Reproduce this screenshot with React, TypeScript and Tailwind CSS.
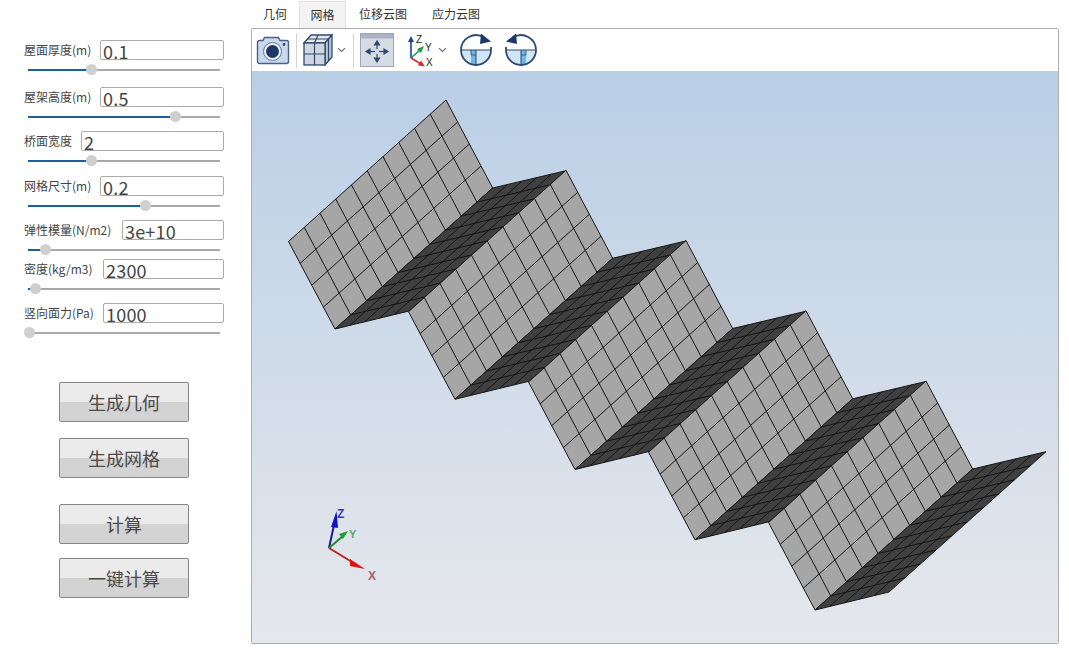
import React from "react";

const CJK = '"Noto Sans CJK SC","Noto Sans",sans-serif';

type P = [number, number];
const lerp = (a: P, b: P, t: number): P => [a[0] + (b[0] - a[0]) * t, a[1] + (b[1] - a[1]) * t];

function Mesh({ a, b, c, d, n, m, fill }: { a: P; b: P; c: P; d: P; n: number; m: number; fill: string }) {
  const lines: string[] = [];
  for (let i = 0; i <= n; i++) {
    const p = lerp(a, b, i / n);
    const q = lerp(d, c, i / n);
    lines.push(`M${p[0]} ${p[1]}L${q[0]} ${q[1]}`);
  }
  for (let j = 0; j <= m; j++) {
    const p = lerp(a, d, j / m);
    const q = lerp(b, c, j / m);
    lines.push(`M${p[0]} ${p[1]}L${q[0]} ${q[1]}`);
  }
  return (
    <g>
      <polygon points={[a, b, c, d].map((p) => p.join(",")).join(" ")} fill={fill} />
      <path d={lines.join("")} stroke="#141414" strokeWidth={1} fill="none" />
    </g>
  );
}

function Roof() {
  const units = [0, 1, 2, 3, 4];
  return (
    <svg viewBox="252 71 806 572" className="block w-full h-full">
      {units.map((i) => {
        const dx = 120 * i;
        const dy = 70.25 * i;
        const s = (x: number, y: number): P => [x + dx, y + dy];
        return (
          <g key={i}>
            <Mesh a={s(288.5, 241.5)} b={s(446, 100)} c={s(492.7, 188)} d={s(335, 329)} n={10} m={4} fill="#a6a6a6" />
            <Mesh a={s(335, 329)} b={s(492.7, 188)} c={s(566, 170.7)} d={s(409, 311)} n={10} m={5} fill="#404040" />
          </g>
        );
      })}
      {/* orientation triad */}
      <g>
        <line x1="329" y1="548" x2="334" y2="525" stroke="#16208c" strokeWidth="2" />
        <polygon points="336.5,511 331,527 338,528" fill="#1212c8" />
        <line x1="329" y1="548" x2="343" y2="536" stroke="#1f8a30" strokeWidth="2" />
        <polygon points="348,531 339,534 343,539" fill="#18a030" />
        <line x1="329" y1="548" x2="352" y2="562" stroke="#c02020" strokeWidth="2" />
        <polygon points="365,569 350,559 350,566" fill="#e01010" />
        <text x="337" y="518" fontFamily="Liberation Sans, sans-serif" fontSize="12" fontWeight="700" fill="#3a3aa8">Z</text>
        <text x="349" y="538" fontFamily="Liberation Sans, sans-serif" fontSize="11" fontWeight="700" fill="#58a868">Y</text>
        <text x="368" y="580" fontFamily="Liberation Sans, sans-serif" fontSize="12" fontWeight="700" fill="#a86068">X</text>
      </g>
    </svg>
  );
}

function Row({
  label,
  value,
  thumb,
  labelW,
  mt,
  pct,
}: {
  label: string;
  value: string;
  thumb: number;
  labelW: number;
  mt: number;
  pct?: boolean;
}) {
  const fillW = thumb;
  return (
    <div style={{ marginTop: mt }}>
      <div className="flex items-center h-[20px] pl-[24px] pr-[27px]">
        <span className="text-[12px] leading-[20px] text-[#444] whitespace-nowrap shrink-0" style={{ width: labelW }}>
          {label}
        </span>
        <div className="flex-1 h-[20px] border border-[#ababab] rounded-[2px] bg-white pl-[2px] text-[18px] leading-[20px] text-[#444] tracking-[0.2px] overflow-hidden">
          {value}
        </div>
      </div>
      <div className="relative h-[2px] ml-[28px] w-[192px] mt-[9px] bg-[#a9a9a9]">
        <div className="h-[2px] bg-[#1c6199]" style={{ width: fillW }} />
        <div
          className="absolute top-[-5px] w-[11px] h-[11px] rounded-full bg-[#cfcfcf]"
          style={{ left: thumb - 5.5 }}
        />
      </div>
    </div>
  );
}

function Btn({ children, mt }: { children: React.ReactNode; mt: number }) {
  return (
    <button
      className="block w-[130px] h-[40px] ml-[59px] border border-[#868686] rounded-[2px] text-[18px] text-[#4a4a4a] bg-[linear-gradient(#ebebeb_0%,#ebebeb_50%,#d3d3d3_50%,#d3d3d3_100%)]"
      style={{ marginTop: mt }}
    >
      {children}
    </button>
  );
}

function Chevron() {
  return (
    <svg width="9" height="6" viewBox="0 0 9 6" className="shrink-0">
      <path d="M1 1.2L4.5 4.5L8 1.2" stroke="#667" strokeWidth="1.1" fill="none" />
    </svg>
  );
}

function Sep() {
  return <div className="w-px h-[35px] bg-[#d2d2d2] shrink-0" />;
}

const NAVY = "#2c4a70";

function Camera() {
  return (
    <svg width="34" height="29" viewBox="0 0 34 29" className="shrink-0">
      <path d="M1.5 6.5a2 2 0 0 1 2-2H7l1.5-3h14l1.5 3h6.5a2 2 0 0 1 2 2v19a2 2 0 0 1-2 2h-27a2 2 0 0 1-2-2z" fill="#c9d8ea" stroke="#44628a" strokeWidth="1.4" />
      <circle cx="16.5" cy="15.5" r="9" fill="#eef3f9" stroke="#5b7698" strokeWidth="1" />
      <circle cx="16.5" cy="15.5" r="6.5" fill="#1d3768" />
      <circle cx="28" cy="8.5" r="1.4" fill="#2c4a70" />
    </svg>
  );
}

function Cube() {
  return (
    <svg width="30" height="32" viewBox="0 0 30 32" className="shrink-0">
      <path d="M1 9L8 1H29L22 9Z" fill="#e4e9f1" stroke={NAVY} strokeWidth="1.3" />
      <path d="M22 9L29 1V23L22 31Z" fill="#b8c4d4" stroke={NAVY} strokeWidth="1.3" />
      <rect x="1" y="9" width="21" height="22" fill="#cfd6e0" stroke={NAVY} strokeWidth="1.3" />
      <path d="M1 20H22M11.5 9V31M4.5 5H25.5M15 1L11.5 9M25.5 5V27" stroke={NAVY} strokeWidth="1.2" fill="none" />
    </svg>
  );
}

function Fit() {
  return (
    <svg width="34" height="34" viewBox="0 0 34 34" className="shrink-0">
      <rect x="0.5" y="0.5" width="33" height="33" fill="#d6dbe4" stroke="#9aa6b6" />
      <rect x="1" y="1" width="32" height="4.5" fill="#a8b4c6" />
      <g stroke={NAVY} strokeWidth="1.2" fill={NAVY}>
        <path d="M17 10V16" /><polygon points="17,8 14.5,12 19.5,12" />
        <path d="M17 21V27" /><polygon points="17,29 14.5,25 19.5,25" />
        <path d="M10 18.5H15" /><polygon points="6,18.5 10,16 10,21" />
        <path d="M19 18.5H24" /><polygon points="28,18.5 24,16 24,21" />
      </g>
    </svg>
  );
}

function Axes() {
  return (
    <svg width="26" height="34" viewBox="0 0 26 34" className="shrink-0">
      <path d="M3 25V8" stroke="#1d3fa0" strokeWidth="1.6" />
      <polygon points="3,3 0,9 6,9" fill="#1d3fa0" />
      <path d="M3 25L12 17" stroke="#1c9a50" strokeWidth="1.6" />
      <polygon points="16,13 9,16 13,20" fill="#1c9a50" />
      <path d="M3 25L13 31" stroke="#d03030" strokeWidth="1.6" />
      <polygon points="17,33.5 10,32.5 13,27.5" fill="#d03030" />
      <text x="8" y="10" fontFamily="Liberation Sans, sans-serif" fontSize="10" fill="#222">Z</text>
      <text x="17" y="18" fontFamily="Liberation Sans, sans-serif" fontSize="10" fill="#222">Y</text>
      <text x="18" y="33" fontFamily="Liberation Sans, sans-serif" fontSize="10" fill="#222">X</text>
    </svg>
  );
}

function Rotate({ flip }: { flip?: boolean }) {
  return (
    <svg width="34" height="34" viewBox="0 0 34 34" className="shrink-0" style={flip ? { transform: "scaleX(-1)" } : undefined}>
      <path d="M2 17H32A15 15 0 0 1 2 17Z" fill="#cfe6f6" />
      <path d="M12 17H17V31.5A15 15 0 0 1 12 30.5Z" fill="#6fb6e6" />
      <path d="M2 17H32M17 17V31.5" stroke={NAVY} strokeWidth="1" fill="none" />
      <path d="M12 17V22H17" stroke={NAVY} strokeWidth="0.8" fill="none" />
      <path d="M2 17A15 15 0 0 1 25 4.5M32 14V17A15 15 0 0 1 2 17" stroke={NAVY} strokeWidth="1.8" fill="none" />
      <polygon points="22,0.5 32,8.5 21,11" fill="#1d3768" />
    </svg>
  );
}

export default function App() {
  return (
    <div className="flex w-[1069px] h-[651px] bg-white overflow-hidden" style={{ fontFamily: CJK }}>
      <aside className="w-[251px] shrink-0 pt-[20px]">
        <Row label="屋面厚度(m)" value="0.1" thumb={63} labelW={76} mt={20} />
        <Row label="屋架高度(m)" value="0.5" thumb={147} labelW={76} mt={16} />
        <Row label="桥面宽度" value="2" thumb={63} labelW={57} mt={13} />
        <Row label="网格尺寸(m)" value="0.2" thumb={117} labelW={76} mt={14} />
        <Row label="弹性模量(N/m2)" value="3e+10" thumb={17} labelW={98} mt={13} />
        <Row label="密度(kg/m3)" value="2300" thumb={7} labelW={79} mt={8} />
        <Row label="竖向面力(Pa)" value="1000" thumb={1} labelW={79} mt={13} />
        <Btn mt={48}>生成几何</Btn>
        <Btn mt={16}>生成网格</Btn>
        <Btn mt={26}>计算</Btn>
        <Btn mt={14}>一键计算</Btn>
      </aside>
      <main className="flex flex-col w-[808px] h-[644px] ml-0">
        <div className="flex h-[28px] text-[12px] text-[#333] pl-[0px]">
          <div className="w-[48px] flex items-center justify-center">几何</div>
          <div className="w-[47px] flex items-center justify-center bg-[#f3f3f3] border border-b-0 border-[#e2e2e2] mt-px">网格</div>
          <div className="w-[74px] flex items-center justify-center">位移云图</div>
          <div className="w-[72px] flex items-center justify-center">应力云图</div>
        </div>
        <div className="flex-1 flex flex-col border border-[#acacac] rounded-[2px] min-h-0">
          <div className="h-[42px] shrink-0 flex items-center pl-[4px] bg-white">
            <Camera />
            <div className="w-[6px]" />
            <Sep />
            <div className="w-[6px]" />
            <Cube />
            <div className="w-[4px]" />
            <Chevron />
            <div className="w-[7px]" />
            <Sep />
            <div className="w-[6px]" />
            <Fit />
            <div className="w-[14px]" />
            <Axes />
            <div className="w-[4px]" />
            <Chevron />
            <div className="w-[12px]" />
            <Rotate />
            <div className="w-[11px]" />
            <Rotate flip />
          </div>
          <div className="flex-1 min-h-0 bg-[linear-gradient(#b9cfe6,#e6e8ec)]">
            <Roof />
          </div>
        </div>
      </main>
    </div>
  );
}
